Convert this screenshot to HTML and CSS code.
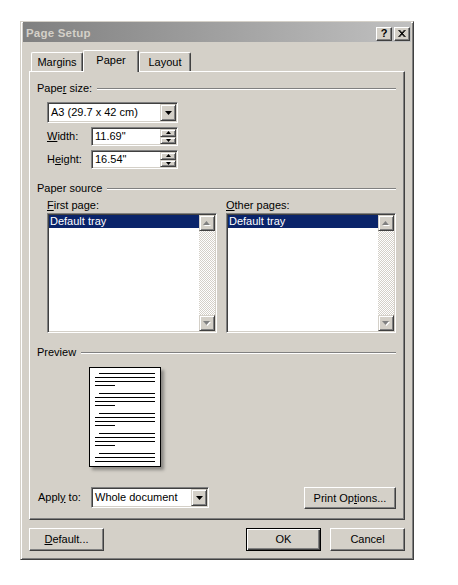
FILE: index.html
```html
<!DOCTYPE html>
<html>
<head>
<meta charset="utf-8">
<title>Page Setup</title>
<link rel="stylesheet" href="styles.css">
</head>
<body>
<div class="dialog">
  <div class="titlebar">
    <span class="title">Page Setup</span>
    <div class="tbtns">
      <span class="tbtn q">?</span>
      <span class="tbtn"><svg width="8" height="7" viewBox="0 0 8 7"><path d="M0.5 0 L6.5 7 M1.5 0 L7.5 7 M6.5 0 L0.5 7 M7.5 0 L1.5 7" stroke="#000" stroke-width="1" fill="none"/></svg></span>
    </div>
  </div>

  <div class="tabs">
    <div class="tab">Margins</div>
    <div class="tab active">Paper</div>
    <div class="tab">Layout</div>
  </div>

  <div class="panel">
    <div class="gh"><span>Pape<u>r</u> size:</span></div>
    <div class="ind">
      <div class="combo size">
        <span class="ctext">A3 (29.7 x 42 cm)</span>
        <span class="dbtn"><svg width="7" height="4" viewBox="0 0 7 4"><path d="M0 0H7L3.5 4Z" fill="#000"/></svg></span>
      </div>
      <div class="frow">
        <span class="flabel"><u>W</u>idth:</span>
        <div class="spin">
          <span class="ctext">11.69"</span>
          <span class="spbtns">
            <span class="spb"><svg width="5" height="3" viewBox="0 0 5 3"><path d="M2.5 0L5 3H0Z" fill="#000"/></svg></span>
            <span class="spb"><svg width="5" height="3" viewBox="0 0 5 3"><path d="M0 0H5L2.5 3Z" fill="#000"/></svg></span>
          </span>
        </div>
      </div>
      <div class="frow">
        <span class="flabel">H<u>e</u>ight:</span>
        <div class="spin">
          <span class="ctext">16.54"</span>
          <span class="spbtns">
            <span class="spb"><svg width="5" height="3" viewBox="0 0 5 3"><path d="M2.5 0L5 3H0Z" fill="#000"/></svg></span>
            <span class="spb"><svg width="5" height="3" viewBox="0 0 5 3"><path d="M0 0H5L2.5 3Z" fill="#000"/></svg></span>
          </span>
        </div>
      </div>
    </div>

    <div class="gh src"><span>Paper source</span></div>
    <div class="ind lists">
      <div class="lcol">
        <div class="llabel"><u>F</u>irst page:</div>
        <div class="lb">
          <div class="items"><div class="sel">Default tray</div></div>
          <div class="sb">
            <span class="sbtn"><svg width="8" height="5" viewBox="0 0 8 5"><path d="M4.5 1L8 5H1Z" fill="#fff"/><path d="M3.5 0L7 4H0Z" fill="#808080"/></svg></span>
            <span class="sbtn"><svg width="8" height="5" viewBox="0 0 8 5"><path d="M1 1H8L4.5 5Z" fill="#fff"/><path d="M0 0H7L3.5 4Z" fill="#808080"/></svg></span>
          </div>
        </div>
      </div>
      <div class="lcol">
        <div class="llabel"><u>O</u>ther pages:</div>
        <div class="lb">
          <div class="items"><div class="sel">Default tray</div></div>
          <div class="sb">
            <span class="sbtn"><svg width="8" height="5" viewBox="0 0 8 5"><path d="M4.5 1L8 5H1Z" fill="#fff"/><path d="M3.5 0L7 4H0Z" fill="#808080"/></svg></span>
            <span class="sbtn"><svg width="8" height="5" viewBox="0 0 8 5"><path d="M1 1H8L4.5 5Z" fill="#fff"/><path d="M0 0H7L3.5 4Z" fill="#808080"/></svg></span>
          </div>
        </div>
      </div>
    </div>

    <div class="gh prev"><span>Preview</span></div>
    <div class="page">
      <svg width="70" height="98" viewBox="0 0 70 98" shape-rendering="crispEdges">
        <g stroke="#000" stroke-width="1">
          <path d="M9 5.5H65 M5 9.5H65 M5 13.5H65 M5 17.5H25"/>
          <path d="M9 25.5H65 M5 29.5H65 M5 33.5H65 M5 37.5H25"/>
          <path d="M9 45.5H65 M5 49.5H65 M5 53.5H65 M5 57.5H25"/>
          <path d="M9 65.5H65 M5 69.5H65 M5 73.5H65 M5 77.5H25"/>
          <path d="M9 85.5H65 M5 89.5H65 M5 93.5H65"/>
        </g>
      </svg>
    </div>

    <div class="apply">
      <span class="alabel"><span>Appl<u>y</u> to:</span></span>
      <div class="combo whole">
        <span class="ctext">Whole document</span>
        <span class="dbtn"><svg width="7" height="4" viewBox="0 0 7 4"><path d="M0 0H7L3.5 4Z" fill="#000"/></svg></span>
      </div>
      <span class="btn popt"><span>Print Op<u>t</u>ions...</span></span>
    </div>
  </div>

  <div class="footer">
    <span class="btn"><span><u>D</u>efault...</span></span>
    <span class="btn ok"><span>OK</span></span>
    <span class="btn"><span>Cancel</span></span>
  </div>
</div>
</body>
</html>
```

FILE: styles.css
```css
* { box-sizing: border-box; }

body {
  margin: 0;
  background: #fff;
  font-family: "Liberation Sans", Arial, sans-serif;
  font-size: 11px;
  line-height: 13px;
  color: #000;
}

u { text-underline-offset: 1px; }

.dialog {
  margin: 21px 0 0 20px;
  width: 394px;
  height: 539px;
  background: #d4d0c8;
  border: 1px solid;
  border-color: #d4d0c8 #404040 #404040 #d4d0c8;
  box-shadow: inset 1px 1px #fff, inset -1px -1px #808080;
  padding: 0 2px 2px 2px;
  display: flex;
  flex-direction: column;
}

.titlebar {
  height: 20px;
  background: linear-gradient(to right, #808080, #c0c0c0);
  display: flex;
  align-items: center;
  justify-content: space-between;
  padding: 3px 1px 0 3px;
}
.title {
  color: #d4d0c8;
  font-weight: bold;
  font-size: 11.5px;
  letter-spacing: 0.2px;
}
.tbtns { display: flex; gap: 2px; }
.tbtn {
  width: 16px;
  height: 14px;
  background: #d4d0c8;
  border: 1px solid;
  border-color: #fff #404040 #404040 #fff;
  box-shadow: inset -1px -1px #808080;
  display: flex;
  align-items: center;
  justify-content: center;
  font-weight: bold;
  font-size: 11px;
  line-height: 12px;
}
.tbtn.q { padding-bottom: 1px; }

.tabs {
  display: flex;
  align-items: flex-end;
  height: 21px;
  margin-top: 8px;
  padding-left: 8px;
  position: relative;
  z-index: 1;
}
.tab {
  width: 52px;
  height: 19px;
  border: 1px solid;
  border-bottom: 0;
  border-color: #fff #404040 #404040 #fff;
  box-shadow: inset -1px 0 #808080;
  border-radius: 2px 2px 0 0;
  text-align: center;
  padding-top: 3px;
  background: #d4d0c8;
}
.tab.active {
  width: 56px;
  height: 22px;
  margin-bottom: -1px;
  position: relative;
  z-index: 2;
}

.panel {
  margin-left: 6px;
  width: 376px;
  height: 449px;
  border: 1px solid;
  border-color: #fff #404040 #404040 #fff;
  box-shadow: inset -1px -1px #808080;
  padding: 10px 8px 0 7px;
  display: flex;
  flex-direction: column;
}

.gh {
  display: flex;
  align-items: center;
  height: 13px;
}
.gh::after {
  content: "";
  flex: 1;
  margin-left: 5px;
  border-top: 1px solid #808080;
  border-bottom: 1px solid #fff;
}
.gh.src { margin-top: 13px; }
.gh.prev { margin-top: 13px; }

.ind { margin-left: 10px; }

.combo, .spin {
  display: flex;
  align-items: stretch;
  background: #fff;
  border: 1px solid;
  border-color: #808080 #fff #fff #808080;
  box-shadow: inset 1px 1px #404040, inset -1px -1px #d4d0c8;
  padding: 1px;
}
.combo { height: 21px; }
.combo.size { margin-top: 7px; width: 131px; }
.ctext {
  flex: 1;
  padding-left: 2px;
  display: flex;
  align-items: center;
  white-space: nowrap;
}
.dbtn {
  width: 16px;
  background: #d4d0c8;
  border: 1px solid;
  border-color: #d4d0c8 #404040 #404040 #d4d0c8;
  box-shadow: inset 1px 1px #fff, inset -1px -1px #808080;
  display: flex;
  align-items: center;
  justify-content: center;
}

.frow {
  display: flex;
  align-items: center;
  margin-top: 4px;
}
.flabel { width: 44px; }
.spin { width: 87px; height: 19px; }
.spbtns {
  width: 16px;
  display: flex;
  flex-direction: column;
}
.spb {
  flex: 1;
  background: #d4d0c8;
  border: 1px solid;
  border-color: #d4d0c8 #404040 #404040 #d4d0c8;
  box-shadow: inset 1px 1px #fff, inset -1px -1px #808080;
  display: flex;
  align-items: center;
  justify-content: center;
}

.lists {
  display: flex;
  gap: 9px;
  margin-top: 4px;
}
.lcol { width: 170px; }
.llabel { height: 13px; }
.lb {
  margin-top: 1px;
  height: 120px;
  display: flex;
  background: #fff;
  border: 1px solid;
  border-color: #808080 #fff #fff #808080;
  box-shadow: inset 1px 1px #404040, inset -1px -1px #d4d0c8;
  padding: 1px;
}
.items { flex: 1; }
.sel {
  background: #0a246a;
  color: #fff;
  height: 13px;
  line-height: 13px;
  padding-left: 1px;
}
.sb {
  width: 16px;
  display: flex;
  flex-direction: column;
  justify-content: space-between;
  background: repeating-conic-gradient(#fff 0 25%, #d4d0c8 0 50%) 0 0 / 2px 2px;
}
.sbtn {
  height: 16px;
  background: #d4d0c8;
  border: 1px solid;
  border-color: #d4d0c8 #404040 #404040 #d4d0c8;
  box-shadow: inset 1px 1px #fff, inset -1px -1px #808080;
  display: flex;
  align-items: center;
  justify-content: center;
}

.page {
  margin: 8px 0 0 52px;
  width: 72px;
  height: 100px;
  background: #fff;
  border: 1px solid #000;
  box-shadow: 3px 3px 3px rgba(0, 0, 0, 0.35);
}
.page svg { display: block; }

.apply {
  display: flex;
  align-items: flex-start;
  margin-top: 20px;
  padding-left: 1px;
}
.alabel {
  width: 53px;
  height: 21px;
  display: flex;
  align-items: center;
}
.combo.whole { width: 118px; }

.btn {
  display: flex;
  align-items: center;
  justify-content: center;
  width: 75px;
  height: 23px;
  background: #d4d0c8;
  border: 1px solid;
  border-color: #fff #404040 #404040 #fff;
  box-shadow: inset -1px -1px #808080;
}
.btn.popt {
  margin-left: auto;
  width: 92px;
  height: 22px;
}
.btn.ok {
  margin-left: auto;
  border-color: #000;
  box-shadow: inset 1px 1px #fff, inset -1px -1px #404040, inset -2px -2px #808080;
}

.footer {
  display: flex;
  gap: 9px;
  margin-top: 8px;
  padding: 0 6px;
}
```
